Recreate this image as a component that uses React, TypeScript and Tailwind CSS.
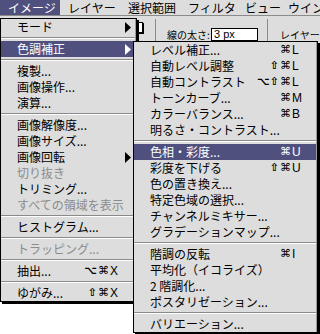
import React from 'react';

type Entry =
  | 'sep'
  | {
      label: string;
      mods?: string;
      key?: string;
      sub?: boolean;
      disabled?: boolean;
      active?: boolean;
    };

const mainItems: Entry[] = [
  { label: 'モード', sub: true },
  'sep',
  { label: '色調補正', sub: true, active: true },
  'sep',
  { label: '複製...' },
  { label: '画像操作...' },
  { label: '演算...' },
  'sep',
  { label: '画像解像度...' },
  { label: '画像サイズ...' },
  { label: '画像回転', sub: true },
  { label: '切り抜き', disabled: true },
  { label: 'トリミング...' },
  { label: 'すべての領域を表示', disabled: true },
  'sep',
  { label: 'ヒストグラム...' },
  'sep',
  { label: 'トラッピング...', disabled: true },
  'sep',
  { label: '抽出...', mods: '⌥', key: 'X' },
  'sep',
  { label: 'ゆがみ...', mods: '⇧', key: 'X' },
];

const subItems: Entry[] = [
  { label: 'レベル補正...', key: 'L' },
  { label: '自動レベル調整', mods: '⇧', key: 'L' },
  { label: '自動コントラスト', mods: '⌥⇧', key: 'L' },
  { label: 'トーンカーブ...', key: 'M' },
  { label: 'カラーバランス...', key: 'B' },
  { label: '明るさ・コントラスト...' },
  'sep',
  { label: '色相・彩度...', key: 'U', active: true },
  { label: '彩度を下げる', mods: '⇧', key: 'U' },
  { label: '色の置き換え...' },
  { label: '特定色域の選択...' },
  { label: 'チャンネルミキサー...' },
  { label: 'グラデーションマップ...' },
  'sep',
  { label: '階調の反転', key: 'I' },
  { label: '平均化（イコライズ）' },
  { label: '2 階調化...' },
  { label: 'ポスタリゼーション...' },
  'sep',
  { label: 'バリエーション...' },
];

const bar = [
  { label: 'イメージ', cls: 'w-[60px] pl-[8px] bg-[#50507f] text-white' },
  { label: 'レイヤー', cls: 'w-[60px] pl-[8px]' },
  { label: '選択範囲', cls: 'w-[60px] pl-[8px]' },
  { label: 'フィルタ', cls: 'w-[58px] pl-[8px]' },
  { label: 'ビュー', cls: 'w-[45px] pl-[7px]' },
  { label: 'ウインドウ', cls: 'pl-[5px]' },
];

function Arrow({ white }: { white?: boolean }) {
  return (
    <svg width="6" height="11" viewBox="0 0 6 11" className="shrink-0">
      <polygon points="0,0 6,5.5 0,11" fill={white ? '#ffffff' : '#000000'} />
    </svg>
  );
}

function Menu({ items, pr }: { items: Entry[]; pr: string }) {
  return (
    <div className="border border-black bg-[#dddddd] shadow-[2px_2px_0_#000]">
      <div className="border-r border-[#999999]">
        {items.map((it, i) => {
          if (it === 'sep') {
            return (
              <div key={i} className="h-[6px] pt-[2px]">
                <div className="h-px bg-[#8a8a8a]" />
                <div className="h-px bg-white" />
              </div>
            );
          }
          const color = it.active ? 'bg-[#50507f] text-white' : it.disabled ? 'text-[#8c8c8c]' : 'text-black';
          return (
            <div
              key={i}
              className={`flex h-[16px] items-center pl-[16px] ${it.sub ? 'pr-[4px]' : pr} ${color}`}
            >
              <span className="flex-1 whitespace-nowrap text-[12px] leading-[16px]">{it.label}</span>
              {it.key && (
                <span className="flex items-center font-['DejaVu_Sans',sans-serif] text-[11px] leading-[16px]">
                  <span className="font-bold">{it.mods}</span>
                  <span className="ml-[1px]">⌘</span>
                  <span className="ml-[1px] w-[10px] font-['Liberation_Sans',sans-serif] text-[12px]">{it.key}</span>
                </span>
              )}
              {it.sub && <Arrow white={it.active} />}
            </div>
          );
        })}
      </div>
    </div>
  );
}

export default function App() {
  return (
    <div className="relative flex h-[334px] w-[320px] flex-col overflow-hidden bg-white font-['Noto_Sans_CJK_JP',sans-serif]">
      {/* menu bar */}
      <div className="flex h-[16px] shrink-0 overflow-hidden border-b border-[#8a8a8a] bg-[#dddddd] text-[12px] leading-[15px]">
        {bar.map((b) => (
          <div key={b.label} className={`h-[15px] shrink-0 whitespace-nowrap ${b.cls}`}>
            {b.label}
          </div>
        ))}
      </div>

      {/* options palette */}
      <div className="flex h-[36px] shrink-0 items-start overflow-hidden bg-[#dddddd] text-[10px]">
        <div className="ml-[120px] mt-[6px] h-[11px] w-[23px] shrink-0 border border-black bg-white shadow-[1px_1px_0_#000]" />
        <div className="ml-[12px] mt-[3px] h-[22px] w-px shrink-0 bg-[#8a8a8a]" />
        <span className="ml-[11px] mt-[13px] w-[42px] shrink-0 whitespace-nowrap leading-[12px]">線の太さ:</span>
        <div className="ml-[2px] mt-[12px] flex h-[13px] w-[47px] shrink-0 items-center whitespace-nowrap border border-black bg-white pl-[2px] font-['Liberation_Sans',sans-serif] text-[11px] leading-[11px]">
          3 px
        </div>
        <div className="ml-[9px] mt-[3px] h-[23px] w-px shrink-0 bg-[#8a8a8a]" />
        <span className="ml-[12px] mt-[13px] shrink-0 whitespace-nowrap leading-[12px]">レイヤースタイル</span>
      </div>

      <div className="flex-1 bg-white" />

      {/* image menu */}
      <div className="absolute left-0 top-[18px] w-[137px]">
        <Menu items={mainItems} pr="pr-[15px]" />
      </div>

      {/* adjust submenu */}
      <div className="absolute left-[133px] top-[41px] w-[185px]">
        <Menu items={subItems} pr="pr-[14px]" />
      </div>
    </div>
  );
}
